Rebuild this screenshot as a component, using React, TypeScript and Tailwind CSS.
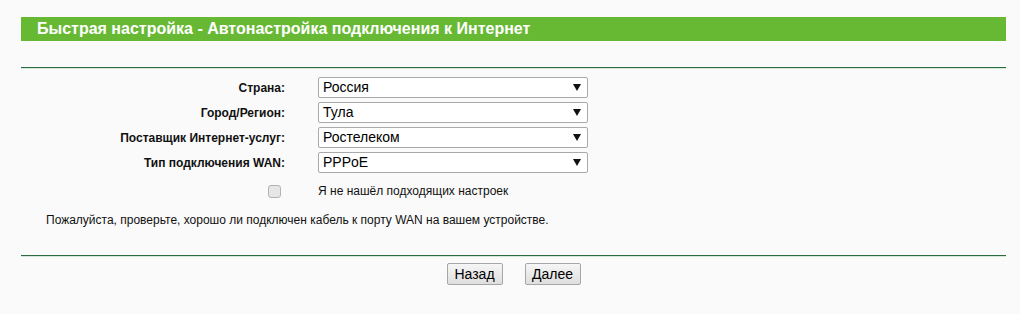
const rows = [
  { label: "Страна:", value: "Россия" },
  { label: "Город/Регион:", value: "Тула" },
  { label: "Поставщик Интернет-услуг:", value: "Ростелеком" },
  { label: "Тип подключения WAN:", value: "PPPoE" },
];

function Select({ value }: { value: string }) {
  return (
    <div className="flex items-center justify-between w-[270px] h-[21px] border border-[#a9a9a9] rounded-[2px] bg-white pl-[4px] pr-[6px] text-[14px] text-black">
      <span>{value}</span>
      <svg width="8" height="7" viewBox="0 0 8 7">
        <path d="M0 0 L8 0 L4 7 Z" fill="#111" />
      </svg>
    </div>
  );
}

function Divider() {
  return (
    <div>
      <div className="h-px bg-[#2b6b3f]" />
      <div className="h-px bg-[#d4e6d8]" />
    </div>
  );
}

function Button({ children }: { children: string }) {
  return (
    <button className="w-[56px] h-[22px] border border-[#a6a6a6] rounded-[2px] bg-gradient-to-b from-[#f6f6f6] to-[#dedede] text-[14px] text-black leading-none">
      {children}
    </button>
  );
}

export default function App() {
  return (
    <div className="min-h-[314px] bg-[#fafafa] font-['Liberation_Sans',Arial,sans-serif] pl-[21px] pr-[14px] pt-[17px]">
      <div className="h-[24px] bg-[#67b934] text-white font-bold text-[16px] flex items-center pl-[16px]">
        Быстрая настройка - Автонастройка подключения к Интернет
      </div>

      <div className="mt-[26px]">
        <Divider />
      </div>

      <div className="mt-[8px] grid grid-cols-[264px_1fr] gap-x-[33px] gap-y-[4px] items-center">
        {rows.map((r) => (
          <div key={r.label} className="contents">
            <div className="text-right text-[12px] font-bold text-[#111]">{r.label}</div>
            <Select value={r.value} />
          </div>
        ))}
        <div className="flex justify-end mt-[5px]">
          <span className="w-[13px] h-[13px] mr-[4px] rounded-[3px] border border-[#b3b3b3] bg-[#e6e6e6]" />
        </div>
        <div className="mt-[5px] text-[12px] text-[#111]">Я не нашёл подходящих настроек</div>
      </div>

      <div className="mt-[11px] pl-[25px] text-[12px] text-[#111]">
        Пожалуйста, проверьте, хорошо ли подключен кабель к порту WAN на вашем устройстве.
      </div>

      <div className="mt-[26px]">
        <Divider />
      </div>

      <div className="mt-[6px] flex justify-center gap-[22px]">
        <Button>Назад</Button>
        <Button>Далее</Button>
      </div>
    </div>
  );
}
